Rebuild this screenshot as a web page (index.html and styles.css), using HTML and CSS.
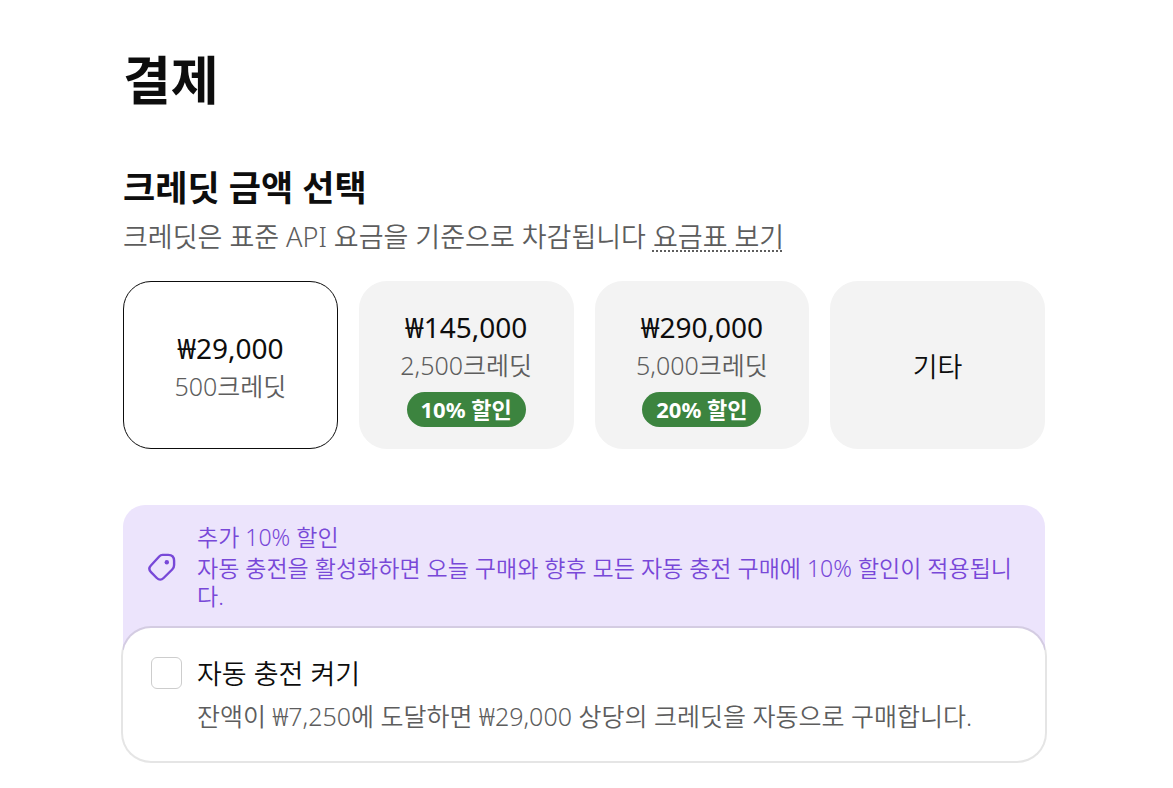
FILE: index.html
```html
<!DOCTYPE html>
<html lang="ko">

<head>
    <meta charset="UTF-8">
    <meta name="viewport" content="width=device-width, initial-scale=1.0">
    <title>결제</title>
    <link rel="stylesheet" href="styles.css">
</head>

<body>
    <main class="container">
        <h1>결제</h1>

        <section>
            <h2>크레딧 금액 선택</h2>
            <p class="subtitle">크레딧은 표준 API 요금을 기준으로 차감됩니다 <a href="#">요금표 보기</a></p>

            <div class="amounts">
                <button type="button" class="amount selected" aria-pressed="true">
                    <span class="price">₩29,000</span>
                    <span class="credits">500크레딧</span>
                </button>
                <button type="button" class="amount" aria-pressed="false">
                    <span class="price">₩145,000</span>
                    <span class="credits">2,500크레딧</span>
                    <span class="badge">10% 할인</span>
                </button>
                <button type="button" class="amount" aria-pressed="false">
                    <span class="price">₩290,000</span>
                    <span class="credits">5,000크레딧</span>
                    <span class="badge">20% 할인</span>
                </button>
                <button type="button" class="amount" aria-pressed="false">
                    <span class="other">기타</span>
                </button>
            </div>
        </section>

        <section class="recharge">
            <div class="promo">
                <svg class="tag-icon" viewBox="0 0 28 28" aria-hidden="true">
                    <path d="M14.6 1.9 H20.2 C24.2 1.9 26.1 3.8 26.1 7.8 V12 C26.1 13.8 25.5 15.2 24.2 16.5 L15.6 25 C13.4 27.2 11 27.2 8.8 25 L3 19.1 C0.8 16.9 0.9 14.6 2.9 12.5 L11.2 3.5 C12.2 2.4 13.3 1.9 14.6 1.9 Z" />
                    <circle cx="18.8" cy="9.2" r="2.2" />
                </svg>
                <div>
                    <p class="promo-title">추가 10% 할인</p>
                    <p class="promo-text">자동 충전을 활성화하면 오늘 구매와 향후 모든 자동 충전 구매에 10% 할인이 적용됩니다.</p>
                </div>
            </div>
            <div class="auto-box">
                <input type="checkbox" id="autoRecharge" name="autoRecharge">
                <div>
                    <label for="autoRecharge">자동 충전 켜기</label>
                    <p>잔액이 ₩7,250에 도달하면 ₩29,000 상당의 크레딧을 자동으로 구매합니다.</p>
                </div>
            </div>
        </section>
    </main>
</body>

</html>
```
FILE: styles.css
```css
* {
    box-sizing: border-box;
}

body {
    margin: 0;
    background-color: #fff;
    color: #0d0d0d;
    font-family: "Noto Sans", "Noto Sans CJK KR", sans-serif;
}

h1,
h2,
p {
    margin: 0;
}

.container {
    padding: 48px 128px 24px 123px;
}

h1 {
    font-size: 52px;
    line-height: 64px;
    font-weight: 700;
    margin-bottom: 56px;
}

h2 {
    font-size: 35px;
    line-height: 40px;
    font-weight: 600;
    margin-bottom: 9px;
}

.subtitle {
    font-size: 27px;
    line-height: 40px;
    font-weight: 350;
    color: #5d5d5d;
    margin-bottom: 24px;
}

.subtitle a {
    color: inherit;
    text-decoration: underline dotted 2px;
    text-underline-offset: 3px;
}

/* Credit amount cards */
.amounts {
    display: grid;
    grid-template-columns: repeat(4, 1fr);
    gap: 21px;
}

.amount {
    display: flex;
    flex-direction: column;
    align-items: center;
    justify-content: center;
    min-height: 168px;
    padding: 4px 0 0;
    border: 1px solid #f3f3f3;
    border-radius: 28px;
    background-color: #f3f3f3;
    color: #0d0d0d;
    font-family: inherit;
    cursor: pointer;
}

.amount.selected {
    border-color: #0d0d0d;
    background-color: #fff;
}

.price {
    font-size: 28px;
    line-height: 38px;
}

.credits {
    font-size: 25px;
    line-height: 38px;
    font-weight: 350;
    color: #5d5d5d;
}

.other {
    font-size: 27px;
    line-height: 38px;
    font-weight: 350;
}

.badge {
    margin-top: 8px;
    padding: 0 14px;
    border-radius: 18px;
    background-color: #3c843f;
    color: #fff;
    font-size: 22px;
    line-height: 35px;
    font-weight: 700;
}

/* Auto recharge */
.recharge {
    margin-top: 56px;
}

.promo {
    display: flex;
    align-items: center;
    gap: 21px;
    padding: 18px 24px 40px 25px;
    border-radius: 22px 22px 0 0;
    background-color: #ece4fc;
    color: #7848d8;
}

.tag-icon {
    flex: none;
    width: 28px;
    height: 28px;
    fill: none;
    stroke: currentColor;
    stroke-width: 2.4;
}

.tag-icon circle {
    fill: currentColor;
    stroke: none;
}

.promo p {
    font-size: 23px;
    line-height: 28px;
    font-weight: 350;
}

.promo .promo-title {
    margin-bottom: 3px;
}

.auto-box {
    position: relative;
    display: flex;
    gap: 15px;
    margin-top: -22px;
    padding: 26px 28px 25px;
    border-radius: 28px;
    background-color: #fff;
    box-shadow: 0 0 0 2px rgba(0, 0, 0, 0.1);
}

.auto-box input {
    appearance: none;
    flex: none;
    width: 31px;
    height: 32px;
    margin: 3px 0 0;
    border: 1px solid #cdcdcd;
    border-radius: 6px;
    background-color: #fff;
}

.auto-box input:checked {
    background-color: #0d0d0d;
}

.auto-box label {
    display: block;
    margin-bottom: 2px;
    font-size: 27px;
    line-height: 40px;
    font-weight: 350;
}

.auto-box p {
    font-size: 25px;
    line-height: 40px;
    font-weight: 350;
    color: #5d5d5d;
}
```
